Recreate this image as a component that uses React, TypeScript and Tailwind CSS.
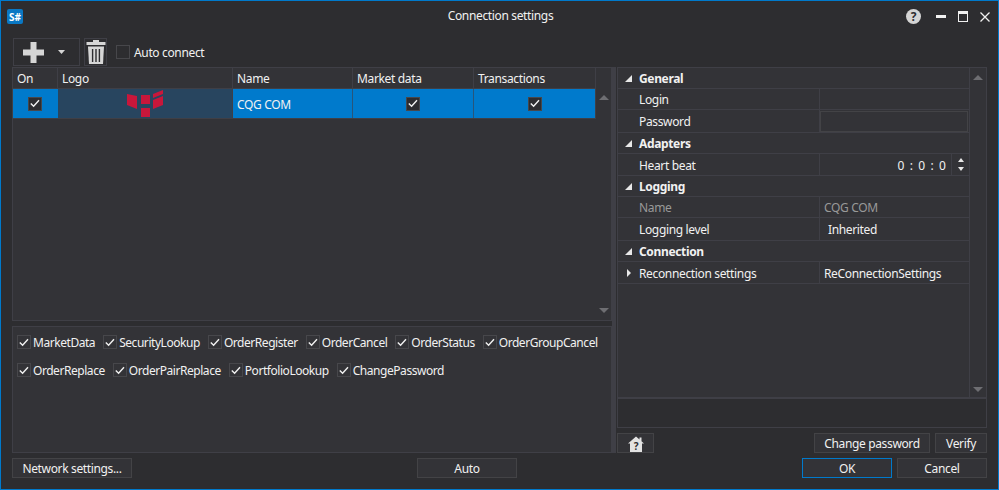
import React from "react";

function Check() {
  return (
    <svg width="10" height="9" viewBox="0 0 10 9" fill="none" stroke="#f1f1f1" strokeWidth="1.4">
      <path d="M0.8 4.4 L3.6 7.2 L9 1.2" />
    </svg>
  );
}

function Box({ checked = true, dark = false }: { checked?: boolean; dark?: boolean }) {
  return (
    <span
      className={`flex h-[14px] w-[14px] shrink-0 items-center justify-center border border-[#47474b] ${
        dark ? "bg-[#2d2d30]" : "bg-[#333337]"
      }`}
    >
      {checked && <Check />}
    </span>
  );
}

function Btn({
  children,
  className = "",
  primary = false,
}: {
  children: React.ReactNode;
  className?: string;
  primary?: boolean;
}) {
  return (
    <div
      className={`flex h-[20px] items-center justify-center border bg-[#333337] pt-[1px] text-[#f1f1f1] ${
        primary ? "border-[#007acc]" : "border-[#434346]"
      } ${className}`}
    >
      {children}
    </div>
  );
}

function Arrow({ down = false }: { down?: boolean }) {
  return (
    <svg width="10" height="5" viewBox="0 0 10 5" fill="#6e6e72">
      <path d={down ? "M0 0 H10 L5 5 Z" : "M5 0 L10 5 H0 Z"} />
    </svg>
  );
}

function Group({ title, h = "h-[21px]" }: { title: string; h?: string }) {
  return (
    <div className={`flex items-center border-b border-[#3f3f46] ${h}`}>
      <svg width="7" height="7" viewBox="0 0 7 7" fill="#e8e8e8" className="ml-[7px]">
        <path d="M7 0 V7 H0 Z" />
      </svg>
      <span className="ml-[7px] pt-[2px] font-bold text-[#f1f1f1]">{title}</span>
    </div>
  );
}

function Prop({
  name,
  h,
  dim = false,
  expand = false,
  children,
}: {
  name: string;
  h: string;
  dim?: boolean;
  expand?: boolean;
  children?: React.ReactNode;
}) {
  return (
    <div className={`grid grid-cols-[202px_1fr] border-b border-[#3f3f46] ${h}`}>
      <div className="flex items-center border-r border-[#3f3f46]">
        <span className="flex w-[21px] justify-center">
          {expand && (
            <svg width="4" height="8" viewBox="0 0 4 8" fill="#e8e8e8">
              <path d="M0 0 L4 4 L0 8 Z" />
            </svg>
          )}
        </span>
        <span className={`pt-[2px] ${dim ? "text-[#999999]" : "text-[#f1f1f1]"}`}>{name}</span>
      </div>
      {children}
    </div>
  );
}

const flagsTop = ["MarketData", "SecurityLookup", "OrderRegister", "OrderCancel", "OrderStatus", "OrderGroupCancel"];
const flagsBottom = ["OrderReplace", "OrderPairReplace", "PortfolioLookup", "ChangePassword"];

function Flags({ items }: { items: string[] }) {
  return (
    <div className="flex h-[14px] items-center gap-[8px]">
      {items.map((item) => (
        <div key={item} className="flex items-center gap-[2px]">
          <Box />
          <span className="pt-[2px] tracking-[-0.45px] text-[#f1f1f1]">{item}</span>
        </div>
      ))}
    </div>
  );
}

export default function App() {
  return (
    <div className="flex h-[490px] w-[999px] flex-col border border-[#007acc] bg-[#2d2d30] font-['Noto_Sans',sans-serif] text-[12px] tracking-[-0.35px] text-[#f1f1f1]">
      {/* title bar */}
      <div className="grid h-[37px] shrink-0 grid-cols-[1fr_auto_1fr] items-start">
        <div className="pl-[6px] pt-[8px]">
          <div className="flex h-[15px] w-[16px] items-center justify-center rounded-[2px] bg-[#0a78c4] text-[10px] font-bold leading-none tracking-normal text-white">
            S#
          </div>
        </div>
        <div className="pl-[2px] pt-[6px]">Connection settings</div>
        <div className="flex items-center justify-end pr-[8px] pt-[8px]">
          <div className="flex h-[15px] w-[15px] items-center justify-center rounded-full bg-[#d4d4d4] text-[12px] font-bold leading-none tracking-normal text-[#2d2d30]">
            ?
          </div>
          <div className="ml-[15px] h-[3px] w-[10px] bg-[#f1f1f1]" />
          <div className="ml-[12px] h-[11px] w-[10px] border border-t-[3px] border-[#f1f1f1]" />
          <svg width="10" height="10" viewBox="0 0 10 10" stroke="#f1f1f1" strokeWidth="1.3" className="ml-[12px]">
            <path d="M0.5 0.5 L9.5 9.5 M9.5 0.5 L0.5 9.5" />
          </svg>
        </div>
      </div>

      {/* toolbar */}
      <div className="flex h-[29px] shrink-0 items-start pl-[12px]">
        <div className="flex h-[28px] w-[67px] items-center border border-[#3f3f46] pl-[9px]">
          <svg width="21" height="21" viewBox="0 0 21 21" fill="#d6d6d6">
            <path d="M7.5 0 H13.5 V7.5 H21 V13.5 H13.5 V21 H7.5 V13.5 H0 V7.5 H7.5 Z" />
          </svg>
          <svg width="7" height="4" viewBox="0 0 7 4" fill="#d6d6d6" className="ml-[14px]">
            <path d="M0 0 H7 L3.5 4 Z" />
          </svg>
        </div>
        <div className="ml-[4px] flex h-[28px] w-[23px] items-center justify-center border border-[#3f3f46]">
          <svg width="20" height="26" viewBox="0 0 20 26" fill="none">
            <path d="M7 1 H13 V3 H19.5 V6 H0.5 V3 H7 Z" fill="#d6d6d6" />
            <path d="M2 7.5 H18 L17 25 H3 Z" fill="#d6d6d6" />
            <path d="M6.6 10 V23 M10 10 V23 M13.4 10 V23" stroke="#2d2d30" strokeWidth="1.4" />
          </svg>
        </div>
        <div className="ml-[9px] flex h-[28px] items-center gap-[4px]">
          <Box checked={false} dark />
          <span className="pt-[2px]">Auto connect</span>
        </div>
      </div>

      {/* main */}
      <div className="flex h-[386px] shrink-0 pl-[11px]">
        <div className="flex w-[600px] shrink-0 flex-col">
          {/* connections table */}
          <div className="flex h-[254px] shrink-0 border border-[#3f3f46] bg-[#333337]">
            <div className="w-[583px] shrink-0">
              <div className="grid h-[21px] grid-cols-[45px_175px_120px_121px_122px] border-b border-[#3f3f46]">
                {["On", "Logo", "Name", "Market data", "Transactions"].map((col) => (
                  <div key={col} className="flex items-center border-r border-[#3f3f46] pl-[4px] pt-[2px]">
                    {col}
                  </div>
                ))}
              </div>
              <div className="grid h-[30px] grid-cols-[45px_175px_120px_121px_122px] border-b border-[#3f3f46] bg-[#007acc]">
                <div className="flex items-center justify-center pr-[1px]">
                  <Box dark />
                </div>
                <div className="flex items-center justify-center border-r border-[#3f3f46] bg-[#28455f]">
                  <svg width="40" height="29" viewBox="0 0 40 29" fill="#c8173b" className="blur-[0.4px]">
                    <path d="M2 5 L12 7 V20 L2 16 Z" />
                    <path d="M16 6 H25 V15 H16 Z" />
                    <path d="M16 19 H25 V28 H16 Z" />
                    <path d="M28 5 L38 1 V5 L28 9 Z" />
                    <path d="M28 11 L38 7 V16 L28 20 Z" />
                  </svg>
                </div>
                <div className="flex items-center border-r border-[#28557a] pl-[4px] pt-[2px]">CQG COM</div>
                <div className="flex items-center justify-center border-r border-[#28557a]">
                  <Box dark />
                </div>
                <div className="flex items-center justify-center border-r border-[#3f3f46]">
                  <Box dark />
                </div>
              </div>
            </div>
            <div className="flex w-[15px] flex-col items-center justify-between pb-[7px] pt-[27px]">
              <Arrow />
              <Arrow down />
            </div>
          </div>
          <div className="h-[5px] shrink-0" />
          {/* supported messages */}
          <div className="flex flex-1 flex-col gap-[14px] border border-[#3f3f46] bg-[#333337] pl-[4px] pt-[8px]">
            <Flags items={flagsTop} />
            <Flags items={flagsBottom} />
          </div>
        </div>

        <div className="w-[4px] shrink-0 bg-[#3f3f46]" />
        <div className="w-[1px] shrink-0" />

        <div className="flex w-[370px] shrink-0 flex-col">
          {/* properties */}
          <div className="flex h-[331px] shrink-0 border border-[#3f3f46] bg-[#333337]">
            <div className="w-[352px] shrink-0 border-r border-[#3f3f46]">
              <Group title="General" />
              <Prop name="Login" h="h-[21px]" />
              <Prop name="Password" h="h-[23px]">
                <div className="mr-[1px] mt-[1px] border border-[#434346]" />
              </Prop>
              <Group title="Adapters" />
              <Prop name="Heart beat" h="h-[22px]">
                <div className="flex items-center justify-end">
                  <span className="pt-[2px] tracking-[1.1px]">0 : 0 : 0</span>
                  <div className="ml-[4px] flex h-full w-[18px] flex-col items-center justify-center gap-[5px] border-l border-[#3f3f46]">
                    <svg width="6" height="4" viewBox="0 0 6 4" fill="#e8e8e8">
                      <path d="M3 0 L6 4 H0 Z" />
                    </svg>
                    <svg width="6" height="4" viewBox="0 0 6 4" fill="#e8e8e8">
                      <path d="M0 0 H6 L3 4 Z" />
                    </svg>
                  </div>
                </div>
              </Prop>
              <Group title="Logging" />
              <Prop name="Name" h="h-[21px]" dim>
                <div className="flex items-center pl-[4px] pt-[2px] text-[#999999]">CQG COM</div>
              </Prop>
              <Prop name="Logging level" h="h-[23px]">
                <div className="flex items-center pl-[8px] pt-[2px]">Inherited</div>
              </Prop>
              <Group title="Connection" />
              <Prop name="Reconnection settings" h="h-[22px]" expand>
                <div className="flex items-center pl-[4px] pt-[2px]">ReConnectionSettings</div>
              </Prop>
            </div>
            <div className="flex flex-1 flex-col items-center justify-between pb-[5px] pt-[7px]">
              <Arrow />
              <Arrow down />
            </div>
          </div>
          <div className="h-[30px] shrink-0 border border-[#3f3f46] bg-[#2d2d30]" />
          <div className="h-[5px] shrink-0" />
          <div className="flex h-[20px] shrink-0 justify-between">
            <Btn className="w-[37px]">
              <svg width="16" height="16" viewBox="0 0 16 16">
                <path d="M8 0.5 L11.5 3.5 V1.5 H13.5 V5.2 L16 7.5 H14 V16 H2 V7.5 H0 Z" fill="#e2e2e2" />
                <text x="8" y="14" textAnchor="middle" fontSize="10" fontWeight="700" fill="#2d2d30">
                  ?
                </text>
              </svg>
            </Btn>
            <div className="flex gap-[5px]">
              <Btn className="w-[116px]">Change password</Btn>
              <Btn className="w-[52px]">Verify</Btn>
            </div>
          </div>
        </div>
      </div>

      {/* bottom buttons */}
      <div className="mt-[5px] flex justify-between pl-[11px] pr-[11px]">
        <Btn className="w-[120px]">Network settings...</Btn>
        <Btn className="w-[100px]">Auto</Btn>
        <div className="flex gap-[5px]">
          <Btn primary className="w-[90px]">
            OK
          </Btn>
          <Btn className="w-[90px]">Cancel</Btn>
        </div>
      </div>
    </div>
  );
}
